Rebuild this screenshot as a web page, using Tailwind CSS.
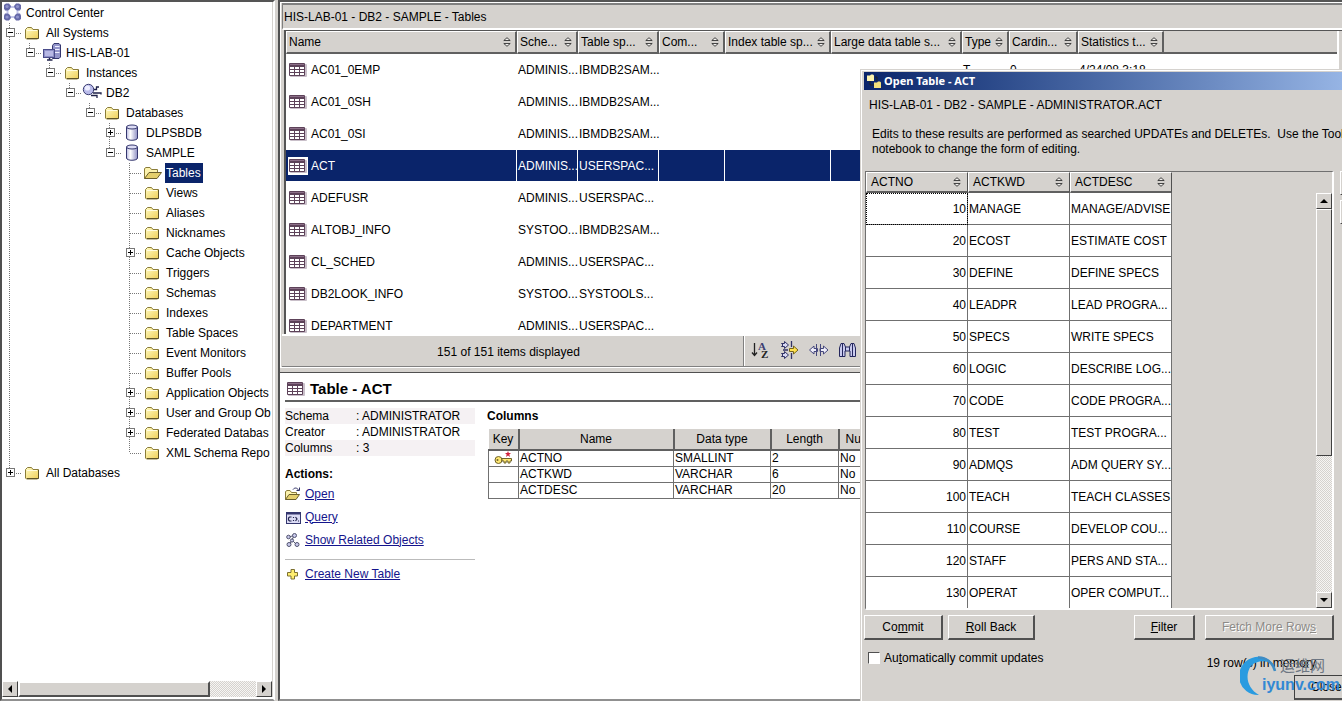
<!DOCTYPE html>
<html lang="en">
<head>
<meta charset="utf-8">
<title>Control Center</title>
<script src="https://cdn.jsdelivr.net/npm/@tailwindcss/browser@4"></script>
</head>
<body class="relative flex h-screen overflow-hidden bg-[#d5d2ce] font-['Liberation_Sans','Noto_Sans_CJK_SC',sans-serif] text-xs leading-4 text-black">

<svg class="absolute h-0 w-0" aria-hidden="true">
  <defs>
    <linearGradient id="gold" x1="0" y1="0" x2="1" y2="1"><stop offset="0" stop-color="#fffbc4"/><stop offset="1" stop-color="#efcf58"/></linearGradient>
    <linearGradient id="steel" x1="0" y1="0" x2="1" y2="0"><stop offset="0" stop-color="#b9bae0"/><stop offset=".35" stop-color="#ffffff"/><stop offset="1" stop-color="#8f90c4"/></linearGradient>
    <pattern id="dither" width="2" height="2" patternUnits="userSpaceOnUse"><rect width="2" height="2" fill="#f6f5f3"/><rect width="1" height="1" fill="#d5d2ce"/><rect x="1" y="1" width="1" height="1" fill="#d5d2ce"/></pattern>
  </defs>
  <symbol id="i-folder" viewBox="0 0 20 20"><path d="M.5 6.5 L2.5 4.5 H6.500 L8 6.500 H13.500 V15 L12.500 16 H1.500 L.5 15Z" fill="url(#gold)" stroke="#8a7c3a"/><path d="M2 7.500H12" stroke="#fffce0"/><path d="M13.500 7V15.500H2" fill="none" stroke="#5c5226"/></symbol>
  <symbol id="i-open" viewBox="0 0 20 20"><path d="M-.5 15.500V5.500L1 4.500H5L6.500 6.500H12.500V9" fill="#fdf3ae" stroke="#8a7c3a"/><path d="M-.5 15.500 4 9.500H16.500L12 15.500Z" fill="#e5cf6c" stroke="#6b5f2c"/></symbol>
  <symbol id="i-root" viewBox="0 0 20 20"><path d="M2.500 4H12.500V14H2.500Z" fill="none" stroke="#c4c6e8" stroke-width="2"/><g fill="#6669a8"><path d="M-1 2 1 .5H4L6 3 5 6 3 7.500H0L-1 5.500Z"/><path d="M16 2 14 .5H11L9 3 10 6 12 7.500H15L16 5.500Z"/><path d="M-1 16 1 17.500H4L6 15 5 12 3 10.500H0L-1 12.500Z"/><path d="M16 16 14 17.500H11L9 15 10 12 12 10.500H15L16 12.500Z"/></g><g fill="#9194cc"><circle cx="2" cy="3.500" r="1.600"/><circle cx="12.500" cy="3.500" r="1.600"/><circle cx="2" cy="14" r="1.600"/><circle cx="12.500" cy="14" r="1.600"/></g></symbol>
  <symbol id="i-system" viewBox="0 0 20 20"><path d="M7.500 15.500V2.500L9 .5H14L15.500 2V14L14 15.500Z" fill="#9395ca" stroke="#34366e"/><path d="M10 3.500H14.500M10 6.500H14.500M10 9.500H14.500" stroke="#eeeeff"/><rect x="-1.500" y="6.500" width="11" height="8" fill="#8d8fc6" stroke="#4a4c8a"/><rect x="0" y="8" width="8" height="5" fill="#b7b8e4"/><path d="M2 17H7.500M4.500 15V17" stroke="#22244c" stroke-width="1.500"/></symbol>
  <symbol id="i-instance" viewBox="0 0 20 20"><path d="M8 6.500H11.500V4H14M8 10H16V11.500M6 12.500H12V15" fill="none" stroke="#1e2048" stroke-width="1.300"/><circle cx="3.500" cy="6.500" r="5.200" fill="#b9bbea" stroke="#3a3c70"/><circle cx="2.500" cy="5" r="2.600" fill="#eeeeff"/></symbol>
  <symbol id="i-db" viewBox="0 0 20 20"><path d="M1.500 4V15C1.500 18 12.500 18 12.500 15V4Z" fill="url(#steel)" stroke="#34366e"/><ellipse cx="7" cy="4" rx="5.500" ry="2" fill="#dcdcf4" stroke="#34366e"/></symbol>
  <symbol id="i-table" viewBox="0 0 18 16"><rect x="1" y="2" width="17" height="13" rx="1" fill="#c9bfc9"/><rect x="0" y="1" width="16" height="13" rx="1" fill="#5d4259"/><path d="M1 2.500H15" stroke="#8c6f88"/><path d="M1 5h4v2h-4zM6 5h4v2h-4zM11 5h4v2h-4zM1 8h4v2h-4zM6 8h4v2h-4zM11 8h4v2h-4zM1 11h4v2h-4zM6 11h4v2h-4zM11 11h4v2h-4z" fill="#fff"/></symbol>
  <symbol id="i-sort" viewBox="0 0 8 10"><path d="M.8 3.500H7.200L4 .7ZM.8 6.500H7.200L4 9.300Z" fill="#f2f1ef" stroke="#333" stroke-width=".9"/></symbol>
</svg>

<!-- Object tree -->
<aside class="flex w-[275px] shrink-0 flex-col border-t-2 border-r-2 border-b-2 border-l-2 border-t-[#555] border-r-white border-b-[#909090] border-l-[#505050] bg-white">
  <nav class="min-h-0 flex-1 overflow-hidden border-r border-[#d5d2ce] pt-px" aria-label="Objects"><ul id="tree"></ul></nav>
  <div class="mb-0.5 flex h-4 border-r border-[#d5d2ce] bg-[#d5d2ce]">
    <button aria-label="Scroll left" class="flex w-4 items-center justify-center border border-t-white border-r-[#404040] border-b-[#404040] border-l-white"><svg class="h-2 w-1" viewBox="0 0 4 8"><path d="M4 0V8L0 4Z"/></svg></button>
    <div class="w-48 border-2 border-t-white border-r-[#505050] border-b-[#505050] border-l-white"></div>
    <svg class="h-4 min-w-0 flex-1"><rect width="100%" height="100%" fill="url(#dither)"/></svg>
    <button aria-label="Scroll right" class="flex w-4 items-center justify-center border border-t-white border-r-[#404040] border-b-[#404040] border-l-white"><svg class="h-2 w-1" viewBox="0 0 4 8"><path d="M0 0V8L4 4Z"/></svg></button>
  </div>
</aside>
<div class="w-[3px] shrink-0"></div>

<!-- Contents and details -->
<main class="flex min-w-0 flex-1 flex-col border-t-2 border-b-2 border-l-2 border-t-[#555] border-b-[#909090] border-l-[#505050]">
  <section class="flex h-[365px] shrink-0 flex-col border-t border-l border-white pl-px">
    <h1 class="h-[27px] border-t-2 border-b-2 border-l border-t-[#808080] border-b-white border-l-[#808080] pt-0.5 pl-px leading-5">HIS-LAB-01 - DB2 - SAMPLE - Tables</h1>
    <div class="ml-0.5 flex h-[304px] overflow-hidden border-t border-l-2 border-[#555]">
      <div class="min-w-0 flex-1">
        <table class="w-full table-fixed border-separate border-spacing-0 bg-white">
          <colgroup><col class="w-[231px]"><col class="w-[61px]"><col class="w-[81px]"><col class="w-[66px]"><col class="w-[106px]"><col class="w-[131px]"><col class="w-[47px]"><col class="w-[69px]"><col class="w-[86px]"><col></colgroup>
          <thead><tr id="heads"></tr></thead>
          <tbody id="rows"></tbody>
        </table>
      </div>
      <div class="w-[5px] shrink-0 border-l-2 border-white"></div>
    </div>
    <div class="flex flex-1 border-t-2 border-b border-t-white border-b-[#808080]">
      <p class="w-[462px] border-r border-[#808080] pt-2 pr-2 text-center">151 of 151 items displayed</p>
      <div class="flex gap-2 border-l border-white pt-1 pl-1.5">
        <button aria-label="Sort" class="h-5"><svg class="h-5 w-[21px]" viewBox="0 0 21 20"><path d="M3.500 3V15M1 12.500 3.500 15.500 6 12.500" fill="none" stroke="#222" stroke-width="1.300"/><text x="7" y="10" font-size="11" font-weight="bold" font-family="Liberation Serif" fill="#3b3d72">A</text><text x="10" y="18" font-size="11" font-weight="bold" font-family="Liberation Serif" fill="#222">Z</text></svg></button>
        <button aria-label="Filter" class="h-5"><svg class="h-5 w-[21px]" viewBox="0 0 21 20" stroke="#303266" stroke-linejoin="round"><path d="M1.500 3.500H4.500V1.500L8.500 5 4.500 8.500V6.500H1.500L3 5ZM1.500 13.500H4.500V11.500L8.500 15 4.500 18.500V16.500H1.500L3 15Z" fill="#d8d9f4"/><path d="M11.500 1V7M11.500 13V19M3 10H8" stroke-width="1.300"/><path d="M9.500 8.500H13.500V6L18 10 13.500 14V11.500H9.500Z" fill="#ffe14d" stroke="#76651c"/></svg></button>
        <button aria-label="Customize columns" class="h-5"><svg class="h-5 w-[21px]" viewBox="0 0 21 20" stroke="#45477c" fill="#eeeefa"><path d="M.5 10 5 6V8.500H8.500V11.500H5V14ZM19 10 14.500 6V8.500H11V11.500H14.500V14Z"/><path d="M7.500 4V16M11.500 4V16"/></svg></button>
        <button aria-label="Find" class="h-5"><svg class="h-5 w-[21px]" viewBox="0 0 21 20" stroke="#24265c" fill="#c9caee"><path d="M1.500 16.500V8L3 3.500H6L7.500 7H11.500L13 3.500H16L17.500 8V16.500H12V11H7V16.500Z"/><path d="M4.500 4V16M14.500 4V16M7.500 7V11M11.500 7V11"/></svg></button>
      </div>
    </div>
  </section>
  <div class="h-1.5 shrink-0 border-t border-b border-t-white border-b-[#505050]"></div>

  <section class="min-h-0 flex-1 bg-white pl-[5px]">
    <h2 class="flex h-[29px] items-center gap-[5px] border-b-2 border-[#606060] pt-1 pl-0.5 text-[15px] font-bold"><svg class="h-4 w-[18px]"><use href="#i-table"/></svg>Table - ACT</h2>
    <div class="flex gap-3 pt-1.5">
      <div class="w-[190px] shrink-0">
        <dl class="grid grid-cols-[71px_1fr]">
          <dt class="bg-[#f5f1f3]">Schema</dt><dd class="bg-[#f5f1f3]">: ADMINISTRATOR</dd>
          <dt>Creator</dt><dd>: ADMINISTRATOR</dd>
          <dt class="bg-[#f5f1f3]">Columns</dt><dd class="bg-[#f5f1f3]">: 3</dd>
        </dl>
        <h3 class="mt-2.5 font-bold">Actions:</h3>
        <ul class="text-[#14148c] underline">
          <li class="flex h-[23px] items-center gap-1"><svg class="h-4 w-4" viewBox="0 0 16 16"><path d="M.5 13.500V5.500L2 4.500H5L6.500 6.500H11.500V8" fill="#fdf3ae" stroke="#8a7c3a"/><path d="M.5 13.500 4 8.500H14.500L11 13.500Z" fill="#e5cf6c" stroke="#6b5f2c"/><path d="M8 3.500C9.500 1.500 12 1.500 13.500 4M14.500 1.500V4.500H11.500" fill="none" stroke="#303266"/></svg><a href="#open">Open</a></li>
          <li class="flex h-[23px] items-center gap-1"><svg class="h-4 w-4" viewBox="0 0 16 16"><rect x="1.500" y="3.500" width="14" height="11" fill="#dcdcf6" stroke="#34366e"/><path d="M1 4.500H16" stroke="#34366e" stroke-width="2"/><path d="M6.500 8H4.500L3.500 9V11L4.500 12H6.500M8.500 8V9M8.500 11V12M10.500 8 12 10 10.500 12M13 12H14" fill="none" stroke="#22244c" stroke-width="1.200"/></svg><a href="#query">Query</a></li>
          <li class="flex h-[23px] items-center gap-1"><svg class="h-4 w-4" viewBox="0 0 16 16" stroke="#50526e" fill="#c9caec"><path d="M3.500 5 9 3.500 7 8 4.500 12.500M7 8 11.500 12.500" fill="none"/><circle cx="3.500" cy="5" r="1.800"/><circle cx="9.500" cy="3.500" r="2"/><circle cx="7" cy="8.500" r="1.600"/><circle cx="4" cy="12.500" r="2"/><circle cx="12" cy="12.500" r="2"/></svg><a href="#related">Show Related Objects</a></li>
          <li class="mt-2 flex items-center gap-1 border-t border-[#bbb] pt-1.5"><svg class="h-4 w-4" viewBox="0 0 16 16"><path d="M6 3.500H9.500V6.500H12.500V10H9.500V13H6V10H2.500V6.500H6Z" fill="#ffee70" stroke="#7c7030"/></svg><a href="#create">Create New Table</a></li>
        </ul>
      </div>
      <div class="min-w-0 flex-1">
        <h3 class="mb-[5px] font-bold">Columns</h3>
        <table class="ml-px w-[440px] table-fixed border-collapse">
          <colgroup><col class="w-[30px]"><col class="w-[155px]"><col class="w-[97px]"><col class="w-[68px]"><col></colgroup>
          <thead><tr class="h-[21px] bg-[#d5d2ce]" id="dheads"></tr></thead>
          <tbody id="drows"></tbody>
        </table>
      </div>
    </div>
  </section>
</main>

<!-- Open Table dialog, in front of the main window -->
<div role="dialog" aria-labelledby="dlg-title" class="absolute top-[69px] right-0 bottom-0 left-[860px] flex flex-col overflow-hidden border-t border-l border-[#d5d2ce] bg-[#d5d2ce]">
  <div class="flex min-h-0 flex-1 flex-col border-t border-l border-white pt-px pl-0.5">
    <h2 id="dlg-title" class="flex h-[18px] shrink-0 items-center gap-0.5 bg-linear-to-r from-[#0a246a] to-[#96b4e4] pl-0.5 font-['Noto_Sans',sans-serif] text-[11px] font-bold text-white"><svg class="h-4 w-4" viewBox="0 0 16 16"><path d="M4 8V12H8M9 4H11V8" fill="none" stroke="#222"/><path d="M1 2.500H4L5 1.500H7L8 2.500V8H1Z" fill="#fdf3ae"/><path d="M8 9.500H11L12 8.500H14L15 9.500V15H8Z" fill="#f3e07c"/></svg>Open Table - ACT</h2>
    <p class="mt-[7px] pl-[5px]">HIS-LAB-01 - DB2 - SAMPLE - ADMINISTRATOR.ACT</p>
    <p class="mt-3.5 pl-2 leading-[15px] whitespace-pre">Edits to these results are performed as searched UPDATEs and DELETEs.  Use the Tools Settings
notebook to change the form of editing.</p>
    <div class="mt-3.5 flex h-[439px] gap-1.5">
      <div class="ml-px flex min-w-0 flex-1 overflow-hidden border-t border-r-2 border-b-2 border-l border-t-[#707070] border-r-white border-b-white border-l-[#707070]">
        <div class="w-[306px] shrink-0">
          <table class="w-full table-fixed border-separate border-spacing-0">
            <thead><tr id="theads"></tr></thead>
            <tbody id="trows"></tbody>
          </table>
        </div>
        <div class="flex-1"></div>
        <div class="mt-[21px] flex w-4 flex-col">
          <button aria-label="Scroll up" class="flex h-4 shrink-0 items-center justify-center border border-t-white border-r-[#404040] border-b-[#404040] border-l-white"><svg class="h-1 w-2" viewBox="0 0 8 4"><path d="M0 4H8L4 0Z"/></svg></button>
          <div class="h-[247px] shrink-0 border border-t-white border-r-[#404040] border-b-[#404040] border-l-white"></div>
          <svg class="min-h-0 w-4 flex-1"><rect width="100%" height="100%" fill="url(#dither)"/></svg>
          <button aria-label="Scroll down" class="flex h-4 shrink-0 items-center justify-center border border-t-white border-r-[#404040] border-b-[#404040] border-l-white"><svg class="h-1 w-2" viewBox="0 0 8 4"><path d="M0 0H8L4 4Z"/></svg></button>
        </div>
      </div>
      <div class="flex w-0.5 flex-col gap-[5px]">
        <button aria-label="Add Row" class="h-6 border-t border-b border-l border-t-white border-b-[#404040] border-l-white"></button>
        <button aria-label="Delete Row" class="h-6 border-t border-b border-l border-t-white border-b-[#404040] border-l-white"></button>
      </div>
    </div>
    <div class="mt-[5px] flex items-center pr-2">
      <button class="h-[25px] w-[79px] border border-r-2 border-b-2 border-t-white border-r-[#505050] border-b-[#505050] border-l-white">Co<u>m</u>mit</button>
      <button class="ml-[5px] h-[25px] w-[87px] border border-r-2 border-b-2 border-t-white border-r-[#505050] border-b-[#505050] border-l-white"><u>R</u>oll Back</button>
      <button class="ml-auto h-[25px] w-[61px] border border-r-2 border-b-2 border-t-white border-r-[#505050] border-b-[#505050] border-l-white"><u>F</u>ilter</button>
      <button disabled class="ml-2.5 h-[25px] w-[129px] border border-r-2 border-b-2 border-t-white border-r-[#505050] border-b-[#505050] border-l-white text-[#8c8a87] [text-shadow:1px_1px_0_white]">Fetch More Row<u>s</u></button>
    </div>
    <div class="mt-2.5 flex h-[25px] pl-1">
      <label class="flex h-4 items-center gap-1"><input type="checkbox" class="h-3 w-3 appearance-none border border-t-[#505050] border-r-white border-b-white border-l-[#505050] bg-white"><span>Au<u>t</u>omatically commit updates</span></label>
      <p class="mr-[26px] ml-auto pt-[5px]">19 row(s) in memory</p>
    </div>
    <div class="flex justify-end">
      <button class="h-[25px] w-12 border border-r-0 border-b-2 border-t-[#404040] border-b-[#505050] border-l-[#404040] pl-4 text-left">Close</button>
    </div>
  </div>
</div>

<!-- Site watermark -->
<div class="pointer-events-none absolute right-0 bottom-1 flex h-[42px] w-[102px]">
  <svg class="absolute h-[42px] w-11" viewBox="0 0 44 42"><path d="M19 40A19 19 0 0 1 12 3C20 0 29 3 34 10 27 5 17 5 11 11 4 21 8 34 19 40Z" fill="#2a9be0"/><path d="M18 2.500C26 2 33 8 35 16" fill="none" stroke="#3f8cc4" stroke-width="2.500"/></svg>
  <div class="ml-[22px] flex flex-col pt-0.5">
    <span class="pl-[18px] text-[15px] leading-[18px] text-[#6d7682]">运维网</span>
    <span class="text-base leading-5 font-bold text-[#3388d4]">iyunv.com</span>
  </div>
</div>

<script>
const $ = id => document.getElementById(id);
const icon = n => `<svg class="h-5 w-5 shrink-0 overflow-visible" viewBox="0 0 20 20"><use href="#i-${n}" class="overflow-visible"/></svg>`;
const sort = '<svg class="h-2.5 w-2 shrink-0"><use href="#i-sort"/></svg>';
document.querySelectorAll('symbol').forEach(s => s.setAttribute('overflow', 'visible'));

// Guide codes, one per indent: "|" line, " " blank, "t" tee, "l" last,
// "+"/"-" expander with the line going on, "p"/"m" expander on the last child.
const tree = [
  ['', 'root', 'Control Center'], ['-', 'folder', 'All Systems'], ['|m', 'system', 'HIS-LAB-01'],
  ['| m', 'folder', 'Instances'], ['|  m', 'instance', 'DB2'], ['|   m', 'folder', 'Databases'],
  ['|    +', 'db', 'DLPSBDB'], ['|    m', 'db', 'SAMPLE'], ['|     t', 'open', 'Tables'],
  ['|     t', 'folder', 'Views'], ['|     t', 'folder', 'Aliases'], ['|     t', 'folder', 'Nicknames'],
  ['|     +', 'folder', 'Cache Objects'], ['|     t', 'folder', 'Triggers'], ['|     t', 'folder', 'Schemas'],
  ['|     t', 'folder', 'Indexes'], ['|     t', 'folder', 'Table Spaces'], ['|     t', 'folder', 'Event Monitors'],
  ['|     t', 'folder', 'Buffer Pools'], ['|     +', 'folder', 'Application Objects'],
  ['|     +', 'folder', 'User and Group Ob'], ['|     +', 'folder', 'Federated Databas'],
  ['|     l', 'folder', 'XML Schema Repo'], ['p', 'folder', 'All Databases']
];
function guide(c) {
  let d = '';
  if ('|t+-'.includes(c)) d += 'M7.5 0V20';
  if ('lpm'.includes(c)) d += 'M7.5 0V10';
  if ('tl+-pm'.includes(c)) d += 'M8 10.5H21';
  const box = '+-pm'.includes(c) ? `<rect x="4.5" y="5.5" width="8" height="8" fill="#fff" stroke="#777"/><path d="M6 9.500H11${'+p'.includes(c) ? 'M8.5 7V12' : ''}" stroke="#000"/>` : '';
  return `<svg class="h-5 w-5 shrink-0" viewBox="0 0 20 20"><path d="${d}" stroke="#777" stroke-dasharray="1 1"/>${box}</svg>`;
}
$('tree').innerHTML = tree.map(([g, i, t]) => `<li class="flex h-5 whitespace-nowrap">${[...g].map(guide).join('')}<span class="w-[3px] shrink-0"></span>${icon(i)}<span class="${t === 'Tables' ? 'bg-[#0a246a] px-px pr-0.5 leading-5 text-white' : 'px-px leading-5'}">${t}</span></li>`).join('');

$('heads').innerHTML = ['Name', 'Sche...', 'Table sp...', 'Com...', 'Index table sp...', 'Large data table s...', 'Type', 'Cardin...', 'Statistics t...', '']
  .map(h => h ? `<th class="h-[23px] border-t border-r-2 border-b-2 border-l border-t-white border-r-[#606060] border-b-[#606060] border-l-white bg-[#d5d2ce] p-0 font-normal"><div class="flex items-center justify-between pr-1 pl-0.5 whitespace-nowrap"><span>${h}</span>${sort}</div></th>`
    : '<th class="border-b-2 border-[#606060] bg-[#d5d2ce]"></th>').join('');
const A = 'ADMINIS...', S = 'SYSTOO...', I = 'IBMDB2SAM...', U = 'USERSPAC...';
$('rows').innerHTML = [['AC01_0EMP', A, I], ['AC01_0SH', A, I], ['AC01_0SI', A, I], ['ACT', A, U], ['ADEFUSR', A, U], ['ALTOBJ_INFO', S, I], ['CL_SCHED', A, U], ['DB2LOOK_INFO', S, 'SYSTOOLS...'], ['DEPARTMENT', A, U]]
  .map(([n, s, t], k) => {
    const rest = k ? ['', '', '', '', '', ''] : ['', '', '', 'T', '0', '4/24/08 3:18'];
    return `<tr class="${n === 'ACT' ? 'h-8 bg-[#0a246a] text-white' : 'h-8'}"><td class="border-r border-b border-white p-0"><div class="flex items-center gap-1 pl-[3px]"><svg class="${n === 'ACT' ? 'h-4 w-[18px] bg-white outline-1 outline-white' : 'h-4 w-[18px]'}"><use href="#i-table"/></svg>${n}</div></td>` +
      [s, t, ...rest].map(c => `<td class="border-r border-b border-white py-0 pr-0 pl-px whitespace-nowrap">${c}</td>`).join('') + '<td class="border-b border-white p-0"></td></tr>';
  }).join('');

$('dheads').innerHTML = ['Key', 'Name', 'Data type', 'Length', 'Nullable']
  .map(h => `<th class="${h === 'Nullable' ? 'border-b-2 border-l-2 border-[#606060] py-0 pr-0 pl-1.5 text-left font-normal' : 'border-r-2 border-b-2 border-[#606060] p-0 font-normal'}">${h}</th>`).join('');
const key = '<svg class="ml-1 h-[15px] w-5" viewBox="0 0 20 15"><circle cx="4.500" cy="9" r="3.500" fill="#ffe873" stroke="#6f6228"/><circle cx="3.500" cy="9" r="1" fill="#6f6228"/><path d="M8 7.500H17.500V10H16V12H14V10H12V12H10V10H8Z" fill="#ffe873" stroke="#6f6228"/><path d="M14 0 14.800 2H17L15.300 3.500 16 6 14 4.500 12 6 12.700 3.500 11 2H13.200Z" fill="#d0203c"/></svg>';
$('drows').innerHTML = [[key, 'ACTNO', 'SMALLINT', '2', 'No'], ['', 'ACTKWD', 'VARCHAR', '6', 'No'], ['', 'ACTDESC', 'VARCHAR', '20', 'No']]
  .map(r => `<tr class="h-4">${r.map(c => `<td class="border border-[#707070] py-0 pr-0 pl-px leading-[15px]">${c}</td>`).join('')}</tr>`).join('');

$('theads').innerHTML = ['ACTNO', 'ACTKWD', 'ACTDESC']
  .map(h => `<th class="h-[21px] border-t border-r border-b-2 border-l border-t-white border-r-[#505050] border-b-[#606060] border-l-white p-0 font-normal"><div class="flex items-center justify-between pr-1.5 pl-1"><span>${h}</span>${sort}</div></th>`).join('');
$('trows').innerHTML = [['10', 'MANAGE', 'MANAGE/ADVISE'], ['20', 'ECOST', 'ESTIMATE COST'], ['30', 'DEFINE', 'DEFINE SPECS'], ['40', 'LEADPR', 'LEAD PROGRA...'], ['50', 'SPECS', 'WRITE SPECS'], ['60', 'LOGIC', 'DESCRIBE LOG...'], ['70', 'CODE', 'CODE PROGRA...'], ['80', 'TEST', 'TEST PROGRA...'], ['90', 'ADMQS', 'ADM QUERY SY...'], ['100', 'TEACH', 'TEACH CLASSES'], ['110', 'COURSE', 'DEVELOP COU...'], ['120', 'STAFF', 'PERS AND STA...'], ['130', 'OPERAT', 'OPER COMPUT...']]
  .map(([n, k, d], i) => `<tr class="h-8 bg-white whitespace-nowrap"><td class="${i ? 'border-r border-b border-[#707070] py-0 pr-px pl-0 text-right' : 'border-r border-b border-[#707070] py-0 pr-px pl-0 text-right outline-1 -outline-offset-1 outline-dotted outline-black'}">${n}</td><td class="border-r border-b border-[#707070] py-0 pr-0 pl-px">${k}</td><td class="border-r border-b border-[#707070] py-0 pr-0 pl-px">${d}</td></tr>`).join('');
</script>
</body>
</html>
